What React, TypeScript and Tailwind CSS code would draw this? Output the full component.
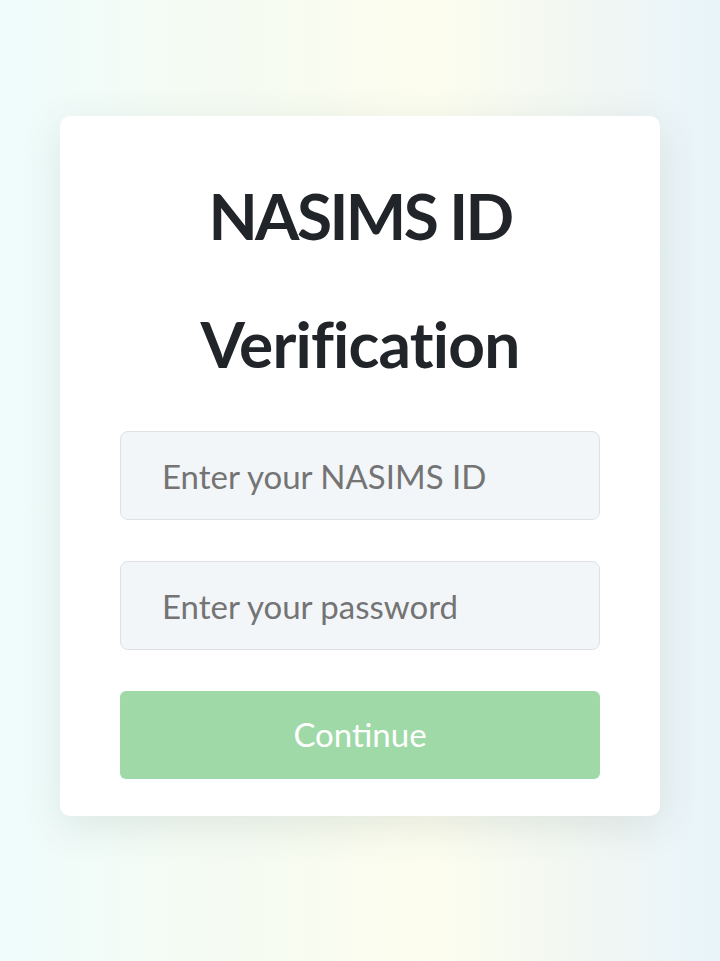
export default function App() {
  return (
    <div className="min-h-screen w-full flex items-start justify-center bg-[linear-gradient(90deg,#effcfc_0%,#f6fbf1_35%,#fcfdee_60%,#f0f6f4_85%,#e8f4fa_100%)] pt-[116px]">
      <div className="w-[600px] h-[700px] bg-white rounded-[10px] shadow-[0_10px_40px_rgba(60,80,80,0.12)] px-[60px] flex flex-col">
        <h1
          className="text-center text-[#212428] font-bold text-[64px] leading-[128px] mt-[36px]"
          style={{ fontFamily: 'Lato, "Noto Sans", sans-serif' }}
        >
          <span className="block tracking-[-2.6px]">NASIMS ID</span>
          <span className="block tracking-[-0.8px]">Verification</span>
        </h1>
        <form
          className="flex flex-col gap-[41px] mt-[23px]"
          style={{ fontFamily: 'Lato, "Noto Sans", sans-serif' }}
          onSubmit={(e) => e.preventDefault()}
        >
          <input
            type="text"
            placeholder="Enter your NASIMS ID"
            className="h-[89px] w-full rounded-[8px] border border-[#dfe1e4] bg-[#f3f6f9] pl-[41px] pr-4 text-[33px] text-[#333] placeholder:text-[#747474] outline-none"
          />
          <input
            type="password"
            placeholder="Enter your password"
            className="h-[89px] w-full rounded-[8px] border border-[#dfe1e4] bg-[#f3f6f9] pl-[41px] pr-4 text-[33px] text-[#333] placeholder:text-[#747474] outline-none"
          />
          <button
            type="submit"
            className="h-[88px] w-full rounded-[6px] bg-[#9fd9a8] text-white text-[33px]"
          >
            Continue
          </button>
        </form>
      </div>
    </div>
  );
}
